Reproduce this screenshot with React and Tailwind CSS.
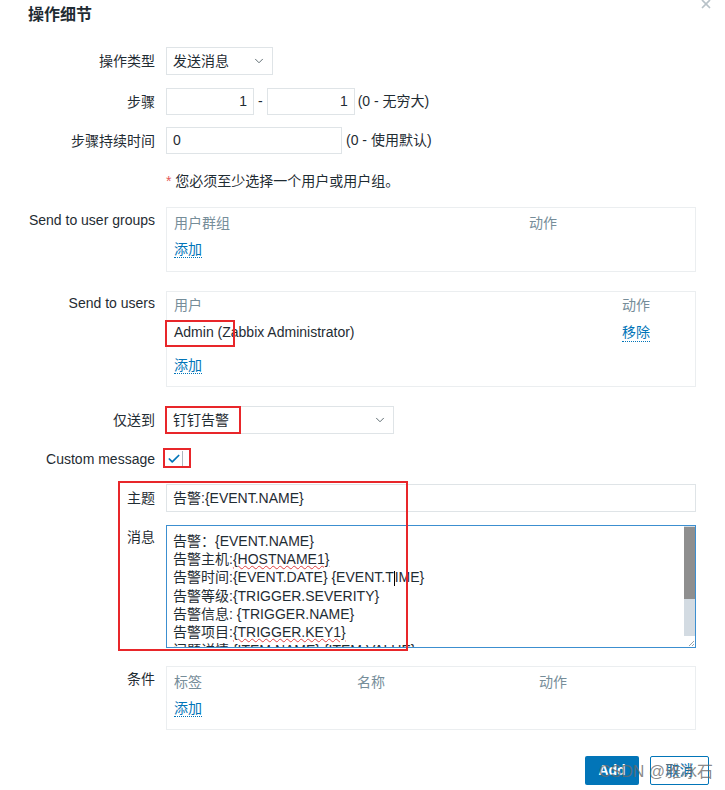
import React from "react";
import { ChevronDown, Check, X } from "lucide-react";

const font = { fontFamily: '"Liberation Sans", Arial, "Noto Sans CJK SC", sans-serif' };

const Label = ({ children, className = "" }) => (
  <div className={`w-[155px] shrink-0 text-right text-[14px] leading-[18px] text-[#1f2c33] ${className}`}>{children}</div>
);

const AddLink = () => (
  <span className="text-[14px] text-[#0275b8] border-b border-dotted border-[#0275b8] leading-[18px]">添加</span>
);

const Redbox = ({ className }) => (
  <div className={`absolute border-2 border-[#e8262a] pointer-events-none ${className}`} />
);

const msgLines = [
  <>告警：{"{EVENT.NAME}"}</>,
  <>告警主机:<span className="underline decoration-wavy decoration-[#e04040] decoration-1">{"{HOSTNAME1}"}</span></>,
  <>
    告警时间:{"{EVENT.DATE} {EVENT.T"}
    <span className="inline-block w-px h-[15px] bg-black align-middle" />
    {"IME}"}
  </>,
  <>告警等级:{"{TRIGGER.SEVERITY}"}</>,
  <>告警信息: {"{TRIGGER.NAME}"}</>,
  <>告警项目:<span className="underline decoration-wavy decoration-[#e04040] decoration-1">{"{TRIGGER.KEY1}"}</span></>,
  <>问题详情:{"{ITEM.NAME}:{ITEM.VALUE}"}</>,
];

export default function App() {
  return (
    <div className="relative w-[725px] h-[790px] bg-white overflow-hidden text-[#1f2c33]" style={font}>
      {/* header */}
      <div className="flex items-center justify-between pl-[28px] pr-[12px] h-[30px]">
        <h2 className="text-[16px] font-bold">操作细节</h2>
        <X size={14} strokeWidth={3} className="text-[#b8c2c8] -mt-[22px]" />
      </div>

      <div className="flex flex-col text-[14px]">
        {/* operation type */}
        <div className="flex items-center gap-[11px] mt-[17px]">
          <Label>操作类型</Label>
          <div className="w-[107px] h-[28px] border border-[#dfe4e7] flex items-center justify-between px-[6px]">
            <span>发送消息</span>
            <ChevronDown size={14} strokeWidth={1.5} className="text-[#4a5960]" />
          </div>
        </div>

        {/* steps */}
        <div className="flex items-center gap-[11px] mt-[13px]">
          <Label>步骤</Label>
          <div className="flex items-center">
            <div className="w-[88px] h-[27px] border border-[#dfe4e7] flex items-center justify-end pr-[6px]">1</div>
            <span className="px-[4px]">-</span>
            <div className="w-[88px] h-[27px] border border-[#dfe4e7] flex items-center justify-end pr-[6px]">1</div>
            <span className="pl-[3px]">(0 - 无穷大)</span>
          </div>
        </div>

        {/* step duration */}
        <div className="flex items-center gap-[11px] mt-[12px]">
          <Label>步骤持续时间</Label>
          <div className="flex items-center">
            <div className="w-[176px] h-[27px] border border-[#dfe4e7] flex items-center pl-[6px]">0</div>
            <span className="pl-[4px]">(0 - 使用默认)</span>
          </div>
        </div>

        {/* notice */}
        <div className="flex items-center gap-[11px] mt-[18px] h-[18px]">
          <Label />
          <span>
            <span className="text-[#e45959]">*</span> 您必须至少选择一个用户或用户组。
          </span>
        </div>

        {/* user groups */}
        <div className="flex items-start gap-[11px] mt-[17px]">
          <Label className="pt-[4px]">Send to user groups</Label>
          <div className="w-[530px] h-[65px] border border-[#ebeef0] px-[7px] pt-[6px]">
            <div className="flex leading-[18px] text-[#768d99]">
              <span className="w-[355px]">用户群组</span>
              <span>动作</span>
            </div>
            <div className="mt-[8px] leading-[18px]"><AddLink /></div>
          </div>
        </div>

        {/* users */}
        <div className="relative flex items-start gap-[11px] mt-[19px]">
          <Label className="pt-[3px]">Send to users</Label>
          <div className="w-[530px] h-[96px] border border-[#ebeef0] px-[7px] pt-[4px]">
            <div className="flex justify-between leading-[18px] text-[#768d99] pr-[38px]">
              <span>用户</span>
              <span>动作</span>
            </div>
            <div className="flex justify-between leading-[18px] mt-[9px] pr-[38px]">
              <span>Admin (Zabbix Administrator)</span>
              <span className="text-[#0275b8] border-b border-dotted border-[#0275b8]">移除</span>
            </div>
            <div className="mt-[14px] leading-[18px]"><AddLink /></div>
          </div>
          <Redbox className="left-[165px] top-[29px] w-[70px] h-[27px]" />
        </div>

        {/* send only to */}
        <div className="relative flex items-center gap-[11px] mt-[19px]">
          <Label>仅送到</Label>
          <div className="w-[228px] h-[28px] border border-[#dfe4e7] flex items-center justify-between px-[6px]">
            <span>钉钉告警</span>
            <ChevronDown size={14} strokeWidth={1.5} className="text-[#4a5960]" />
          </div>
          <Redbox className="left-[165px] top-0 w-[76px] h-[28px]" />
        </div>

        {/* custom message */}
        <div className="relative flex items-center gap-[9px] mt-[16px]">
          <Label>Custom message</Label>
          <div className="w-[19px] h-[16px] border-x border-[#aeb8be] flex items-center justify-center">
            <Check size={14} strokeWidth={3} className="text-[#0275b8]" />
          </div>
          <Redbox className="left-[163px] -top-[2px] w-[28px] h-[20px]" />
        </div>

        {/* subject / message */}
        <div className="relative flex flex-col mt-[16px]">
          <div className="flex items-center gap-[11px]">
            <Label>主题</Label>
            <div className="w-[530px] h-[28px] border border-[#dfe4e7] flex items-center pl-[6px]">
              告警:{"{EVENT.NAME}"}
            </div>
          </div>
          <div className="flex items-start gap-[11px] mt-[13px]">
            <Label className="pt-[3px]">消息</Label>
            <div className="w-[530px] h-[123px] border border-[#3c8fd0] flex overflow-hidden">
              <div className="flex-1 pl-[6px] pt-[6px] leading-[18.2px] whitespace-nowrap overflow-hidden">
                {msgLines.map((l, i) => (
                  <div key={i}>{l}</div>
                ))}
              </div>
              <div className="w-[11px] flex flex-col bg-[#d3dbe2]">
                <div className="h-[72px] bg-[#8f8f8f] mt-[1px]" />
                <div className="flex-1" />
                <div className="h-[11px] bg-white flex items-end justify-end">
                  <svg width="7" height="7" viewBox="0 0 7 7">
                    <path d="M6 1L1 6M6 4L4 6" stroke="#9aa4aa" strokeWidth="1" />
                  </svg>
                </div>
              </div>
            </div>
          </div>
          <Redbox className="left-[118px] -top-[3px] w-[290px] h-[170px]" />
        </div>

        {/* conditions */}
        <div className="flex items-start gap-[11px] mt-[18px]">
          <Label className="pt-[4px]">条件</Label>
          <div className="w-[530px] h-[64px] border border-[#ebeef0] px-[7px] pt-[6px]">
            <div className="flex leading-[18px] text-[#768d99]">
              <span className="w-[183px]">标签</span>
              <span className="w-[182px]">名称</span>
              <span>动作</span>
            </div>
            <div className="mt-[8px] leading-[18px]"><AddLink /></div>
          </div>
        </div>

        {/* buttons */}
        <div className="relative flex justify-end gap-[11px] mt-[26px] pr-[16px]">
          <button className="w-[54px] h-[29px] bg-[#0275b8] text-white text-[14px] rounded-[2px] font-bold">Add</button>
          <button className="w-[59px] h-[29px] border border-[#0275b8] text-[#0275b8] text-[14px] rounded-[2px] bg-white">取消</button>
          <span className="absolute right-[12px] top-[4px] text-[16px] text-[#6c6c6c]/80 pointer-events-none">CSDN @雅冰石</span>
        </div>
      </div>
    </div>
  );
}
